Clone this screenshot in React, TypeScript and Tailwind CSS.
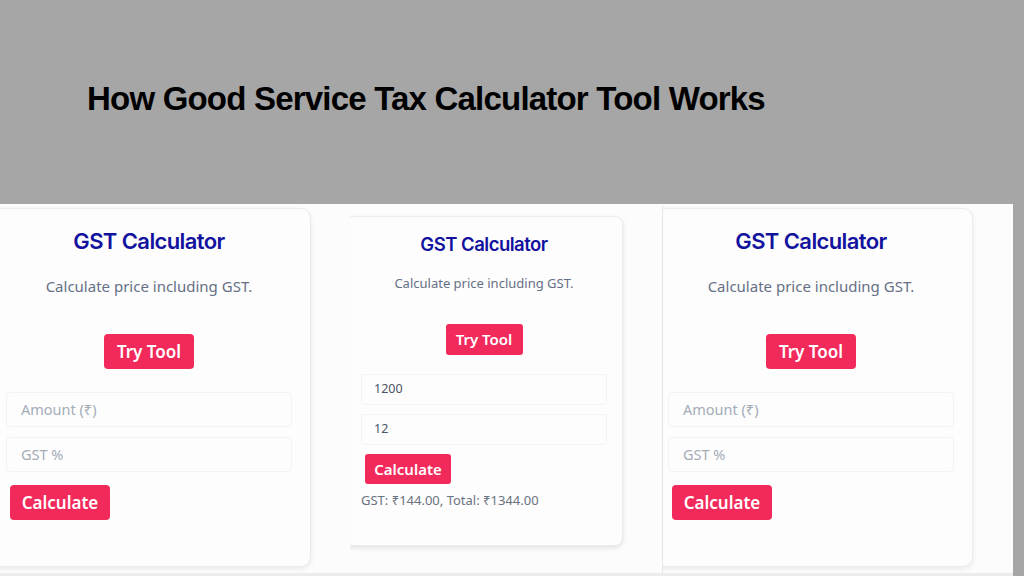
import React from "react";

function BigCard({ shift }: { shift: string }) {
  return (
    <div
      className={`${shift} w-[324px] h-[359px] shrink-0 rounded-[10px] border border-[#ececec] bg-[#fdfdfd] shadow-[0_2px_5px_rgba(0,0,0,0.08)] flex flex-col items-center pt-[18px] font-['Noto_Sans',sans-serif]`}
    >
      <div className="text-[22px] leading-[28px] font-semibold tracking-[-0.6px] text-[#12129e] font-['Inter',sans-serif]">
        GST Calculator
      </div>
      <div className="mt-[20px] text-[15px] leading-[22px] text-[#667085]">
        Calculate price including GST.
      </div>
      <div className="mt-[37px] h-[35px] w-[90px] rounded-[4px] bg-[#f2295b] text-white text-[17px] font-semibold flex items-center justify-center">
        Try Tool
      </div>
      <div className="self-stretch px-[18px] flex flex-col">
        <div className="mt-[23px] h-[35px] rounded-[4px] border border-[#f3f3f3] flex items-center pl-[14px] text-[14.5px] text-[#a4acb8]">
          Amount (₹)
        </div>
        <div className="mt-[10px] h-[35px] rounded-[4px] border border-[#f3f3f3] flex items-center pl-[14px] text-[14.5px] text-[#a4acb8]">
          GST %
        </div>
        <div className="mt-[13px] ml-[4px] h-[35px] w-[100px] rounded-[4px] bg-[#f2295b] text-white text-[17px] font-semibold flex items-center justify-center">
          Calculate
        </div>
      </div>
    </div>
  );
}

function SmallCard() {
  return (
    <div className="mt-[12px] ml-[-5px] w-[278px] h-[330px] shrink-0 rounded-[8px] border border-[#ececec] bg-[#fdfdfd] shadow-[0_2px_5px_rgba(0,0,0,0.1)] flex flex-col items-center pt-[15px] font-['Noto_Sans',sans-serif]">
      <div className="text-[18.5px] leading-[24px] font-semibold tracking-[-0.5px] text-[#12129e] font-['Inter',sans-serif]">
        GST Calculator
      </div>
      <div className="mt-[18px] text-[13px] leading-[18px] text-[#667085]">
        Calculate price including GST.
      </div>
      <div className="mt-[32px] h-[31px] w-[77px] rounded-[3px] bg-[#f2295b] text-white text-[15px] font-semibold flex items-center justify-center">
        Try Tool
      </div>
      <div className="self-stretch px-[15px] flex flex-col">
        <div className="mt-[19px] h-[31px] rounded-[3px] border border-[#f3f3f3] flex items-center pl-[12px] text-[12.5px] text-[#4b5563]">
          1200
        </div>
        <div className="mt-[9px] h-[31px] rounded-[3px] border border-[#f3f3f3] flex items-center pl-[12px] text-[12.5px] text-[#4b5563]">
          12
        </div>
        <div className="mt-[9px] ml-[4px] h-[30px] w-[86px] rounded-[3px] bg-[#f2295b] text-white text-[15px] font-semibold flex items-center justify-center">
          Calculate
        </div>
        <div className="mt-[7px] text-[13px] leading-[18px] text-[#6b7280]">
          GST: ₹144.00, Total: ₹1344.00
        </div>
      </div>
    </div>
  );
}

export default function App() {
  return (
    <div className="w-[1024px] h-[576px] bg-[#a6a6a6] flex flex-col overflow-hidden">
      <div className="h-[204px] shrink-0 flex items-center pl-[87px] pb-[7px]">
        <h1 className="text-[33px] leading-[40px] font-bold text-black tracking-[-0.8px] font-['Liberation_Sans',Arial,sans-serif]">
          How Good Service Tax Calculator Tool Works
        </h1>
      </div>
      <div className="flex h-[372px] w-[1013px] bg-[#fcfcfc] border-b-[3px] border-[#ececec]">
        <div className="w-[350px] shrink-0 overflow-hidden flex">
          <BigCard shift="mt-[4px] ml-[-13px]" />
        </div>
        <div className="w-[312px] shrink-0 overflow-hidden flex">
          <SmallCard />
        </div>
        <div className="w-[351px] shrink-0 overflow-hidden flex border-l border-[#e6e6e6] mt-[2px]">
          <BigCard shift="mt-[2px] ml-[-14px]" />
        </div>
      </div>
    </div>
  );
}
